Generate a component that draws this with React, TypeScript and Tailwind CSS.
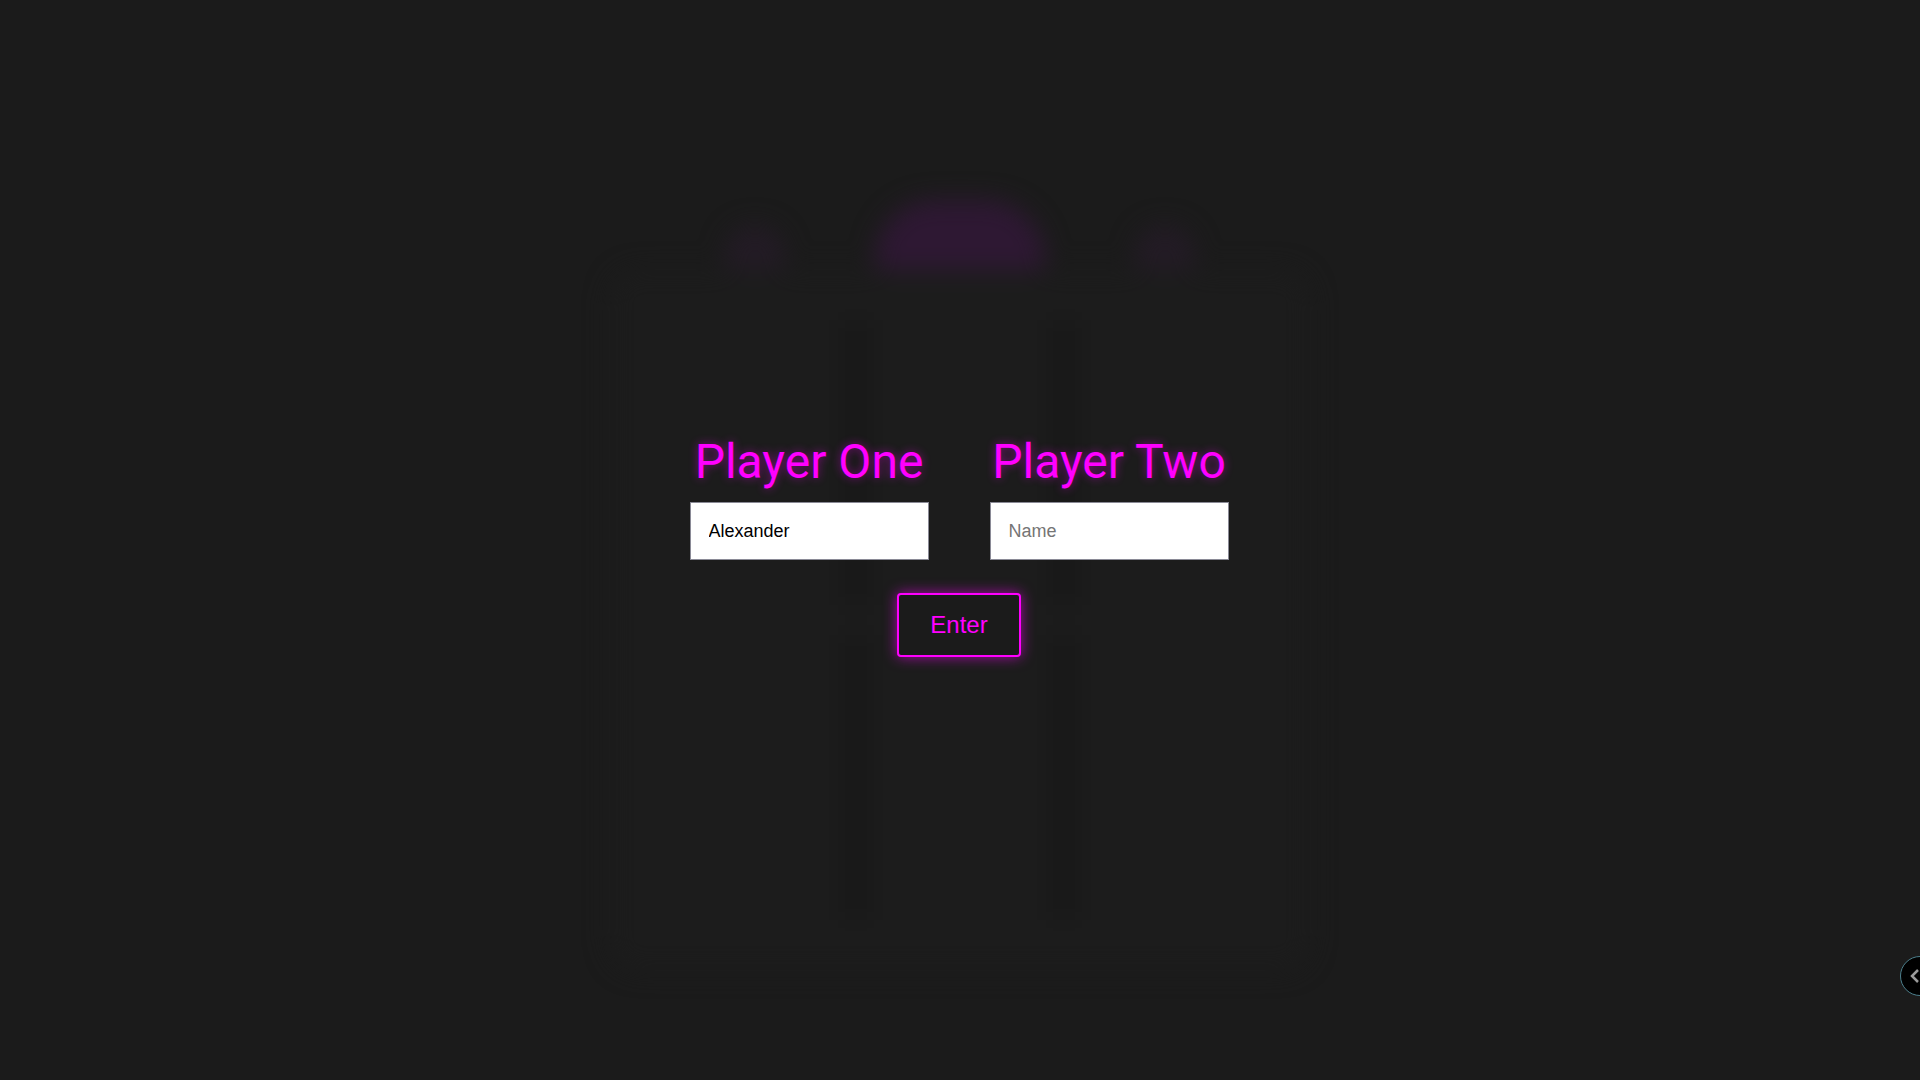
import React from "react";

const Board = () => {
  return (
    <div className="col-start-1 row-start-1 justify-self-center self-start mt-[170px] blur-[12px]">
      <div className="flex flex-col items-center">
        <div className="flex flex-row items-center gap-[90px] h-[180px]">
          <div className="w-[60px] h-[70px] rounded-full bg-[#231b25]" />
          <div className="w-[170px] h-[120px] rounded-full bg-[#2e1833]" />
          <div className="w-[60px] h-[70px] rounded-full bg-[#231b25]" />
        </div>
        <div className="w-[700px] h-[700px] -mt-[80px] rounded-[30px] bg-[#1c1c1c] p-[50px] flex flex-col gap-[30px]">
          <div className="flex flex-1 flex-row">
            <div className="flex-1 border-r-[24px] border-[#171717]" />
            <div className="flex-1 border-r-[24px] border-[#171717]" />
            <div className="flex-1" />
          </div>
          <div className="flex flex-1 flex-row">
            <div className="flex-1 border-r-[24px] border-[#171717]" />
            <div className="flex-1 border-r-[24px] border-[#171717]" />
            <div className="flex-1" />
          </div>
        </div>
      </div>
    </div>
  );
};

const PlayerField = ({
  title,
  value,
}: {
  title: string;
  value: string;
}) => {
  return (
    <div className="flex flex-col items-center w-[239px]">
      <h1 className="text-[48px] leading-[48px] text-[#ff00ff] font-['Roboto',sans-serif] [text-shadow:0_0_10px_rgba(255,0,255,0.45)] whitespace-nowrap">
        {title}
      </h1>
      <input
        type="text"
        defaultValue={value}
        placeholder="Name"
        className="mt-[16px] w-[239px] h-[58px] bg-white border border-[#8a8a96] pl-[18px] text-[18px] text-black placeholder:text-[#757575] font-['Liberation_Sans',sans-serif] outline-none"
      />
    </div>
  );
};

export default function App() {
  return (
    <div className="relative h-screen w-full overflow-hidden bg-[#1b1b1b]">
      <div className="grid h-full w-full">
        <Board />
        <div className="relative z-10 col-start-1 row-start-1 justify-self-center self-start mt-[438px] flex flex-col items-center ml-[-2px]">
          <div className="flex flex-row gap-[61px]">
            <PlayerField title="Player One" value="Alexander" />
            <PlayerField title="Player Two" value="" />
          </div>
          <button className="mt-[33px] w-[124px] h-[64px] rounded-[4px] border-2 border-[#ff00ff] bg-[#1b1b1b] text-[#ff00ff] text-[24px] font-['Liberation_Sans',sans-serif] shadow-[0_0_14px_rgba(255,0,255,0.6)]">
            Enter
          </button>
        </div>
      </div>

      <div className="absolute z-10 left-[1900px] top-[956px] w-[40px] h-[40px] rounded-full bg-black border border-[#4c7f8c] flex items-center pl-[9px]">
        <svg width="10" height="14" viewBox="0 0 10 14" fill="none">
          <path d="M8 1 L2 7 L8 13" stroke="#9a9a9a" strokeWidth="2.5" />
        </svg>
      </div>
    </div>
  );
}
